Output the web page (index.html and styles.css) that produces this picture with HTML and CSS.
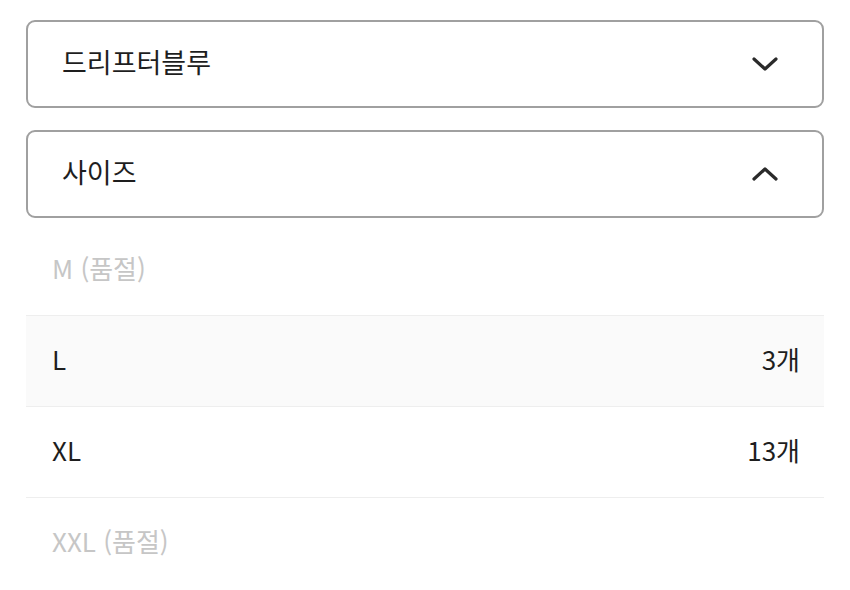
FILE: index.html
```html
<!DOCTYPE html>
<html lang="ko">
<head>
    <meta charset="UTF-8">
    <title>옵션 선택</title>
    <link rel="stylesheet" href="styles.css">
</head>
<body>

<div class="options">
    <div class="select">
        <span class="select-label">드리프터블루</span>
        <svg class="chevron" width="26" height="16" viewBox="0 0 26 16"><path d="M2 3 L13 13 L24 3" /></svg>
    </div>

    <div class="select">
        <span class="select-label">사이즈</span>
        <svg class="chevron" width="26" height="16" viewBox="0 0 26 16"><path d="M2 13 L13 3 L24 13" /></svg>
    </div>

    <ul class="size-list">
        <li class="size soldout"><span>M (품절)</span></li>
        <li class="size hover"><span>L</span><span class="stock">3개</span></li>
        <li class="size"><span>XL</span><span class="stock">13개</span></li>
        <li class="size soldout"><span>XXL (품절)</span></li>
    </ul>
</div>

</body>
</html>
```

FILE: styles.css
```css
body {
    margin: 0;
    background: #fff;
    font-family: 'Noto Sans CJK KR', 'Noto Sans', sans-serif;
    color: #1e1e1e;
}

.options {
    padding: 20px 26px 0 26px;
    width: 798px;
}

.select {
    display: flex;
    justify-content: space-between;
    align-items: center;
    height: 84px;
    border: 2px solid #a0a0a0;
    border-radius: 9px;
    padding: 0 44px 0 34px;
    margin-bottom: 22px;
}

.select:last-of-type {
    margin-bottom: 0;
}

.select-label {
    font-size: 27px;
    color: #1e1e1e;
    padding-bottom: 6px;
}

.chevron path {
    fill: none;
    stroke: #2a2a2a;
    stroke-width: 3.2;
    stroke-linecap: round;
    stroke-linejoin: round;
}

.size-list {
    list-style: none;
    margin: 7px 0 0 0;
    padding: 0;
}

.size {
    display: flex;
    justify-content: space-between;
    align-items: center;
    height: 84px;
    padding: 0 24px 6px 26px;
    border-bottom: 1px solid #eeeeee;
    font-size: 26px;
    color: #1e1e1e;
}

.size:last-child {
    border-bottom: none;
}

.size.hover {
    background: #fafafa;
}

.size.soldout {
    color: #c6c6c6;
}
```
